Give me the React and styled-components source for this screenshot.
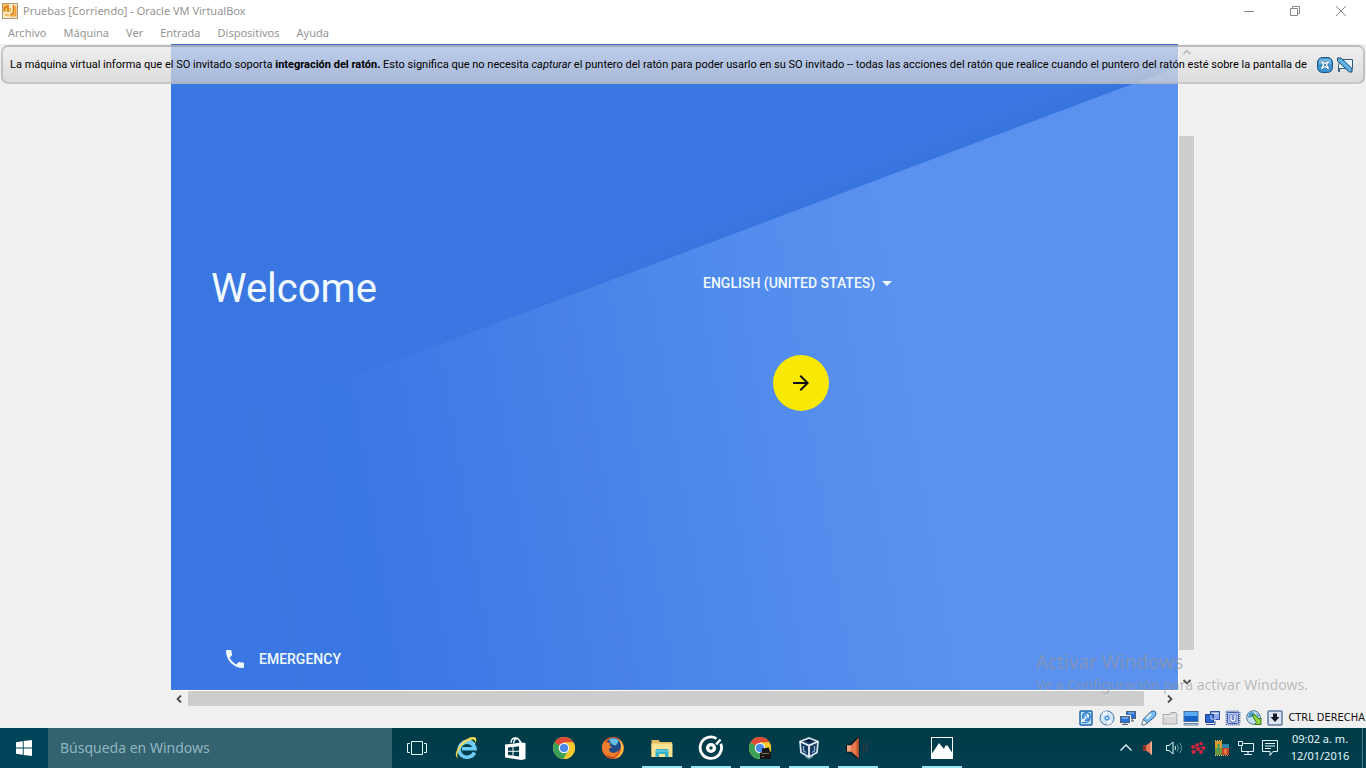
import React from 'react'
import styled, { createGlobalStyle } from 'styled-components'

const GlobalStyle = createGlobalStyle`
    * {
        box-sizing: border-box;
    }
    body {
        margin: 0;
        background-color: #f0f0f0;
        font-family: "Noto Sans", "Open Sans", sans-serif;
    }
    button, input, select {
        font-family: inherit;
        border: none;
        padding: 0;
        background: none;
        color: inherit;
    }
    svg {
        display: block;
    }
`
const Container = styled.div`
    min-height: 100vh;
    display: flex;
    flex-direction: column;
`

/* window chrome */
const TitleBar = styled.header`
    height: 24px;
    padding: 0 15px 2px 2px;
    display: flex;
    align-items: center;
    gap: 5px;
    background-color: #fff;
`
const Title = styled.h1`
    flex: 1;
    margin: 0;
    font-size: 11px;
    font-weight: 400;
    line-height: 16px;
    color: #959595;
`
const WindowButtons = styled.div`
    display: flex;
    gap: 26px;
`
const WindowButton = styled.button`
    width: 20px;
    height: 20px;
    display: flex;
    align-items: center;
    justify-content: center;
`
const MenuBar = styled.nav`
    height: 20px;
    padding: 0 0 2px 8px;
    display: flex;
    align-items: center;
    gap: 17px;
    background-color: #fff;
`
const MenuItem = styled.button`
    font-size: 11px;
    line-height: 16px;
    color: #959595;
`

/* guest screen */
const Stage = styled.main`
    position: relative;
    flex: 1;
    padding: 0 171px 1px;
    display: flex;
    background-color: #f0f0f0;
`
const Viewer = styled.div`
    flex: 1;
    display: grid;
    grid-template-columns: 1fr 16px;
    grid-template-rows: 1fr 16px;
    gap: 1px;
`
const Screen = styled.section`
    position: relative;
    border-top: 1px solid #3a6cc0;
    padding: 0 0 17px 40px;
    display: flex;
    flex-direction: column;
    justify-content: space-between;
    font-family: Roboto, sans-serif;
    color: #f1fbff;
    box-shadow: 1px 1px 0 #fff;
`
const Wallpaper = styled.svg`
    position: absolute;
    inset: 0;
    width: 100%;
    height: 100%;
`
const Setup = styled.div`
    position: relative;
    padding-top: 220px;
    display: flex;
    align-items: flex-start;
`
const Welcome = styled.h2`
    flex: 0 0 492px;
    margin: 0;
    font-size: 40px;
    font-weight: 400;
    line-height: 48px;
`
const Choices = styled.form`
    width: 196px;
    display: flex;
    flex-direction: column;
    align-items: center;
    gap: 60px;
`
const Language = styled.label`
    width: 100%;
    height: 30px;
    padding-top: 6px;
    display: flex;
    align-items: center;
    gap: 6px;
`
const LanguageSelect = styled.select`
    appearance: none;
    font-size: 14px;
    font-weight: 500;
    line-height: 20px;
`
const NextButton = styled.button`
    width: 56px;
    height: 56px;
    border-radius: 50%;
    background-color: #f8e804;
    display: flex;
    align-items: center;
    justify-content: center;
`
const Emergency = styled.button`
    position: relative;
    align-self: flex-start;
    margin-left: 12px;
    height: 28px;
    display: flex;
    align-items: center;
    gap: 12px;
    font-size: 14px;
    font-weight: 500;
    line-height: 20px;
`
const ScrollBar = styled.div`
    display: flex;
    flex-direction: ${props => props.$vertical ? 'column' : 'row'};
    background-color: #f0f0f0;
`
const ScrollButton = styled.button`
    flex: 0 0 16px;
    display: flex;
    align-items: center;
    justify-content: center;
    min-height: 16px;
`
const ScrollTrack = styled.div`
    flex: 1;
    display: flex;
    flex-direction: ${props => props.$vertical ? 'column' : 'row'};
    padding: ${props => props.$vertical ? '76px 1px 24px 0' : '0 18px 1px 1px'};
`
const ScrollThumb = styled.div`
    flex: 1;
    background-color: #cdcdcd;
`
const MessageBar = styled.aside`
    position: absolute;
    top: 1px;
    left: 1px;
    right: 1px;
    height: 39px;
    padding: 1px 10px 0 7px;
    display: flex;
    align-items: center;
    gap: 4px;
    border: 2px solid rgba(150, 150, 150, 0.45);
    border-radius: 7px;
    background: linear-gradient(rgba(238, 238, 238, 0.72), rgba(212, 212, 212, 0.72));
`
const Message = styled.p`
    flex: 1;
    min-width: 0;
    margin: 0;
    overflow: hidden;
    white-space: nowrap;
    font-family: Roboto, sans-serif;
    font-size: 11px;
    line-height: 16px;
    color: #000;
`
const MessageButton = styled.button`
    width: 16px;
    height: 16px;
`
const Watermark = styled.div`
    position: absolute;
    right: 55px;
    bottom: 13px;
    width: 275px;
    color: rgba(150, 150, 150, 0.6);
    pointer-events: none;
`
const WatermarkTitle = styled.div`
    font-size: 19px;
    line-height: 26px;
`
const WatermarkText = styled.div`
    font-size: 14px;
    line-height: 20px;
    white-space: nowrap;
`

/* status bar */
const StatusBar = styled.footer`
    height: 20px;
    padding-right: 1px;
    display: flex;
    align-items: center;
    justify-content: flex-end;
    gap: 5px;
    background-color: #f0f0f0;
    border-bottom: 1px solid #e4f1f7;
`
const StatusButton = styled.button`
    width: 16px;
    height: 16px;
`
const HostKey = styled.span`
    font-family: "DejaVu Sans Condensed", "DejaVu Sans", sans-serif;
    font-size: 11px;
    line-height: 16px;
    color: #111;
`

/* taskbar */
const TaskBar = styled.footer`
    height: 40px;
    display: flex;
    align-items: stretch;
    color: #e4f8fc;
    background: linear-gradient(#003b46, #003e50);
`
const StartButton = styled.button`
    width: 48px;
    display: flex;
    align-items: center;
    justify-content: center;
    background-color: #00445a;
`
const Search = styled.input`
    width: 344px;
    padding: 0 12px;
    background-color: #34626f;
    font-size: 14px;
    line-height: 20px;
    outline: none;
    &::placeholder {
        color: #8fb6bf;
        opacity: 1;
    }
`
const Apps = styled.div`
    flex: 1;
    padding-left: 5px;
    display: flex;
    gap: 9px;
`
const AppButton = styled.button`
    width: 40px;
    margin-left: ${props => props.$spaced ? '35px' : '0'};
    display: flex;
    align-items: center;
    justify-content: center;
    border-bottom: 2px solid ${props => props.$open ? '#98e4f6' : 'transparent'};
    border-top: 2px solid transparent;
`
const Tray = styled.div`
    display: flex;
    align-items: center;
    gap: 8px;
`
const TrayButton = styled.button`
    width: 16px;
    height: 16px;
`
const Clock = styled.time`
    width: 68px;
    padding-bottom: 2px;
    font-size: 11px;
    line-height: 17px;
    text-align: center;
`
const ShowDesktop = styled.button`
    width: 4px;
    align-self: stretch;
    border-left: 1px solid #4c7883;
`

/* title icons */
const VBoxLogo = () => (
    <svg width="16" height="16" viewBox="0 0 16 16">
        <rect x="0.5" y="0.5" width="15" height="15" fill="#fbe9c4" stroke="#a89a80" />
        <path d="M1 1h6l-1 6-5 3z" fill="#f6c35a" />
        <path d="M2.500 8V4.500L6 3v6M11.500 2v8l-3 2" fill="none" stroke="#d9781c" strokeWidth="1.600" />
        <path d="M13.500 3v9.500H8" fill="none" stroke="#eea030" strokeWidth="2" />
        <path d="M3 12h4M8 5v4" stroke="#f3ae36" strokeWidth="1.600" />
    </svg>
)
const Chevron = ({ d }) => (
    <svg width="8" height="8" viewBox="0 0 8 8">
        <path d={d} fill="none" stroke="#4b4b4b" strokeWidth="1.800" />
    </svg>
)

const CloseIcon = () => (
    <svg width="16" height="16" viewBox="0 0 16 16">
        <rect x="0.500" y="0.500" width="15" height="15" rx="5" fill="#3d93cd" stroke="#17547f" />
        <path d="M3 2h10q1 0 1 2v3H2V4q0-2 1-2z" fill="#86c5ec" opacity="0.700" />
        <path d="M5 3.500l3 2 3-2L12.500 5 10.500 8l2 3-1.500 1.500-3-2-3 2L3.500 11l2-3-2-3z" fill="#fff" stroke="#2a6d9f" strokeWidth="0.600" />
        <path d="M6.500 6.500l3 3M9.500 6.500l-3 3" stroke="#3d84b8" />
    </svg>
)
const MuteIcon = () => (
    <svg width="16" height="16" viewBox="0 0 16 16">
        <path d="M3 2.500h12.500v9h-3v3l-4-3H2.500v3h-1v-6z" fill="#e9f5fb" stroke="#315a78" />
        <path d="M0.500 1h3.500l11 10.500v3.500h-2.500L0.500 4z" fill="#62b3e5" stroke="#174b70" />
    </svg>
)

/* device icons */
const DiskIcon = () => (
    <svg width="16" height="16" viewBox="0 0 16 16">
        <rect x="2" y="1" width="12" height="14" rx="1" fill="#bfe3fa" stroke="#1b64b0" strokeWidth="1.500" />
        <circle cx="8.500" cy="6.500" r="4" fill="#5aaaf0" stroke="#1b64b0" />
        <path d="M8.500 6.500L4 12M9 4.500q2 1 1 3" stroke="#fff" strokeWidth="1.500" fill="none" />
        <path d="M4 12.500q6 1 8-3" stroke="#1b64b0" fill="none" />
    </svg>
)
const CdIcon = () => (
    <svg width="16" height="16" viewBox="0 0 16 16">
        <circle cx="8" cy="8" r="7" fill="#d5e6f8" stroke="#4270a5" />
        <path d="M8 8L3 3.500A7 7 0 0 1 8 1zM8 8l5 4.500A7 7 0 0 1 8 15z" fill="#f8fcff" />
        <circle cx="8" cy="8" r="2.500" fill="#3884e2" stroke="#8db8ef" />
        <circle cx="8" cy="8" r="1" fill="#fff" />
    </svg>
)
const NetworkIcon = () => (
    <svg width="16" height="16" viewBox="0 0 16 16">
        <rect x="6.500" y="1.500" width="9" height="7" fill="#2b70d4" stroke="#50617c" />
        <path d="M8 3h6" stroke="#a7ceff" />
        <path d="M12 9v2M10 11h4" stroke="#50617c" />
        <rect x="0.500" y="6.500" width="9" height="6" fill="#2c74da" stroke="#50617c" />
        <path d="M2 8h6" stroke="#a7ceff" />
        <path d="M2 14.500h6M5 13v2" stroke="#50617c" />
        <path d="M0 5.500h10.500v7.500" fill="none" stroke="#fff" />
    </svg>
)
const UsbIcon = () => (
    <svg width="16" height="16" viewBox="0 0 16 16">
        <path d="M10 1.500q4-1.500 5 1 0 3-2 5l-7 5.500-4-3.500z" fill="#78bdf2" stroke="#2c5d99" />
        <path d="M5 7.500l4-4 2 1-5 5z" fill="#e1f4ff" />
        <path d="M2.500 9.500l4 3.500L3 15H1v-2z" fill="#f4f8fb" stroke="#53708d" />
    </svg>
)
const FolderIcon = () => (
    <svg width="16" height="16" viewBox="0 0 16 16">
        <path d="M1 4.500h7l1-2h5l1 2v9.500H1z" fill="#d9d9d9" stroke="#aaa" />
        <path d="M2 6h12" stroke="#f2f2f2" />
    </svg>
)
const DisplayIcon = () => (
    <svg width="16" height="16" viewBox="0 0 16 16">
        <rect x="1" y="1.500" width="14" height="10" fill="#1663c8" stroke="#4b6e9c" />
        <path d="M1.500 2h13v4h-13z" fill="#5cabf5" />
        <path d="M1 13.500h14v1.500H1z" fill="#dbe7f3" stroke="#4b6e9c" strokeWidth="0.800" />
    </svg>
)
const CaptureIcon = () => (
    <svg width="16" height="16" viewBox="0 0 16 16">
        <rect x="6.500" y="1.500" width="9" height="8" fill="#8ca5f0" stroke="#33509f" />
        <path d="M8 3.500h6" stroke="#d3deff" strokeWidth="1.500" />
        <rect x="1.500" y="4.500" width="8" height="8" fill="#2a63cd" stroke="#27468c" />
        <path d="M7 5v4h5" fill="none" stroke="#c9d7ff" />
        <path d="M2 14.500h9V11" fill="none" stroke="#33509f" />
    </svg>
)
const CpuIcon = () => (
    <svg width="16" height="16" viewBox="0 0 16 16">
        <rect x="1.500" y="1.500" width="13" height="13" rx="1" fill="none" stroke="#5068ab" strokeWidth="2" strokeDasharray="1 1" />
        <rect x="2.500" y="2.500" width="11" height="11" rx="1" fill="#b4c8f6" stroke="#3f5aa6" />
        <path d="M6 4.500v4.500q0 2 2 2t2-2V4.500" fill="none" stroke="#3f5cab" strokeWidth="3" />
        <path d="M6 5v4q0 2 2 2t2-2V5" fill="none" stroke="#fff" strokeWidth="1.400" />
    </svg>
)
const MouseIcon = () => (
    <svg width="16" height="16" viewBox="0 0 16 16">
        <circle cx="7.500" cy="7.500" r="6.800" fill="#c5dff2" stroke="#45718e" />
        <path d="M3 3l4-1 2 2-3 3-4 1zM10 3l3 2-1 3z" fill="#4b9ac4" />
        <path d="M6 5h3l4 4 2-1v6.500H8.500l2-2z" fill="#91d63c" stroke="#347422" />
    </svg>
)
const HostIcon = () => (
    <svg width="16" height="16" viewBox="0 0 16 16">
        <rect x="1" y="1" width="14" height="14" rx="1" fill="#dce7f6" stroke="#627ba0" strokeWidth="1.500" />
        <path d="M6 3.500h4V7h2.500L8 12 3.500 7H6z" fill="#151b24" />
    </svg>
)

/* taskbar icons */
const WindowsIcon = () => (
    <svg width="16" height="16" viewBox="0 0 16 16">
        <path d="M0 2.200L6.800 1.200v6.300H0zM7.700 1.100L16 0v7.500H7.700zM0 8.400h6.800v6.400L0 13.800zM7.700 8.400H16V16l-8.300-1.100z" fill="#fff" />
    </svg>
)
const TaskViewIcon = () => (
    <svg width="20" height="14" viewBox="0 0 20 14">
        <path d="M4.500 0.500h11v13h-11zM3 2.500H0.500v9H3M17 2.500h2.500v9H17" fill="none" stroke="#e4f8fc" />
    </svg>
)
const ExplorerIcon = () => (
    <svg width="24" height="24" viewBox="0 0 24 24">
        <path d="M20.500 16.500A8 7.500 0 1 1 21 12.700H8" fill="none" stroke="#6dcdf6" strokeWidth="3.600" />
        <path d="M6 9q2-5 8-5 5 0 7 4" fill="none" stroke="#c0efff" />
        <path d="M4 22.500Q-1 20 5 10.500 13 0 20.500 1q3 1 1 6.500Q21.500 3 18 3.500 11.500 5 6.500 11.500 1.500 19 4 22.500z" fill="#f4d94f" />
    </svg>
)
const StoreIcon = () => (
    <svg width="24" height="24" viewBox="0 0 24 24">
        <path d="M8 7q0-4.500 4-5t5 4.500M10.500 7q1-5 4-4t3.500 4" fill="none" stroke="#fff" strokeWidth="1.300" />
        <path d="M2 8.500L18.500 6.500 22.500 7v16L18.500 24 2 21.500z" fill="#fff" />
        <path d="M5 11.500l4.500-.5v3.800H5zM10.500 10.900l5.500-.7v4.600h-5.500zM5 15.800h4.500v3.800L5 19.100zM10.500 15.800H16v4.700l-5.500-.7z" fill="#003c4c" />
    </svg>
)
const ChromeIcon = ({ badge }) => (
    <svg width="24" height="24" viewBox="0 0 24 24">
        <circle cx="12" cy="12" r="11" fill="#f6c92f" />
        <path d="M12 12L2.500 6.500A11 11 0 0 1 21.500 6.500H12z" fill="#df4939" />
        <path d="M12 12L2.500 6.500A11 11 0 0 0 11.500 23L16.500 14.500z" fill="#3ba057" />
        <path d="M12 6.500h9.500A11 11 0 0 1 11.500 23l5-8.500z" fill="#f6c92f" />
        <circle cx="12" cy="12" r="5.300" fill="#f2f4f4" />
        <circle cx="12" cy="12" r="4.100" fill="#4a88e8" />
        {badge && <path d="M14 12.500l7-1 1 4.500 1 .500V23H12v-6.500h2z" fill="#171717" />}
        {badge && <path d="M14 17.500h7M14 20.500h2" stroke="#8e6a4c" />}
    </svg>
)
const FirefoxIcon = () => (
    <svg width="24" height="24" viewBox="0 0 24 24">
        <circle cx="12" cy="12" r="11" fill="#dd5a22" />
        <circle cx="12.500" cy="9.500" r="7.500" fill="#1d4c87" />
        <path d="M8 3.500q5-3 10 1l-3 5-4-1z" fill="#63bde6" />
        <path d="M18 3.500q5 4 4.500 10-1.500 8-9.500 9.500 6-3.500 7-9.500.500-5-2-10z" fill="#f8c04a" />
        <path d="M1.500 8L3.500 4.500 5 6.500q2.500-.500 4.500.500l-1 2.500 2.500 1.500-3 2q0 3.500 4 4 3 0 5-2.500-1 6.500-7 6.500-8-.500-9-9z" fill="#ee7d2d" />
        <path d="M4 17q4 5 10 4-5 3.500-10-4z" fill="#a93319" />
    </svg>
)
const FilesIcon = () => (
    <svg width="24" height="24" viewBox="0 0 24 24">
        <path d="M1.500 4h7l1.500 2h12v15h-20.500z" fill="#e3bd5c" />
        <path d="M1.500 7.500h21V21h-21z" fill="#fbe395" />
        <path d="M5.500 21v-6.500q0-1.500 1.500-1.500h10q1.500 0 1.500 1.500V21h-3.500v-3h-6v3z" fill="#35b1c9" />
        <path d="M5.500 15h13" stroke="#82dbe5" />
    </svg>
)
const GrooveIcon = () => (
    <svg width="26" height="26" viewBox="0 0 26 26">
        <path d="M18.500 3.600A10.700 10.700 0 1 0 22.800 8.800" fill="none" stroke="#fff" strokeWidth="2.800" />
        <circle cx="13" cy="13" r="3.400" fill="none" stroke="#fff" strokeWidth="3.400" />
        <path d="M18 9.500L22.500 4.500" stroke="#fff" strokeWidth="2.600" />
    </svg>
)
const CubeIcon = () => (
    <svg width="24" height="24" viewBox="0 0 24 24">
        <path d="M12 2l9 3.500-1 11L12 21l-8-4.500-1-11z" fill="#173b63" stroke="#d8e7f1" strokeWidth="1.700" />
        <path d="M3 5.500l9 4 9-4M12 9.500V21" fill="none" stroke="#eef7fd" strokeWidth="1.700" />
        <path d="M8 4.800l4-1.300 4 1.300-4 1.700z" fill="#04172d" />
        <path d="M6.500 10v5l2.500 1.500M17.500 10v5L15 16.500" fill="none" stroke="#93b2ca" strokeWidth="1.300" />
        <path d="M8 20.500l4 2.500 4-2.500" fill="none" stroke="#7ea0b7" />
    </svg>
)
const HornIcon = () => (
    <svg width="24" height="24" viewBox="0 0 24 24">
        <path d="M0 8.500h3L11 1h2.500v22H11l-7-6H0z" fill="#0a2029" />
        <path d="M1 9.500h4L12.500 2v20L5 15.500H1z" fill="#e8794d" />
        <path d="M1 9.500h4v6H1z" fill="#f0a47c" />
        <path d="M10.500 4l2-2v20l-2-2z" fill="#c4562f" />
        <path d="M17 8q2 4 0 8M20 6q3 6 0 12" fill="none" stroke="#2d3b43" strokeWidth="1.500" />
    </svg>
)
const PhotosIcon = () => (
    <svg width="22" height="22" viewBox="0 0 22 22">
        <rect x="0.500" y="0.500" width="21" height="21" fill="#003c4c" stroke="#fff" />
        <path d="M1 16.500L8 6l5 6 1.500-3.500h2l4.500 7V21H1z" fill="#fff" />
    </svg>
)

/* tray icons */
const TrayUp = () => (
    <svg width="16" height="16" viewBox="0 0 16 16">
        <path d="M2.500 10.500L8 5l5.500 5.500" fill="none" stroke="#e4f8fc" strokeWidth="1.300" />
    </svg>
)
const TrayHorn = () => (
    <svg width="16" height="16" viewBox="0 0 16 16">
        <path d="M1 5.500h3L10 1v14L4 10.500H1z" fill="#e27757" />
        <path d="M1 5.500h3v5H1z" fill="#8d3022" />
        <path d="M8.500 2.200L10 1v14l-1.500-1.200z" fill="#f1b39b" />
    </svg>
)
const TrayVolume = () => (
    <svg width="16" height="16" viewBox="0 0 16 16">
        <path d="M0.500 5.500h2.500L7 2v12L3 10.500H0.500z" fill="none" stroke="#e4f8fc" />
        <path d="M9 6q1.500 2 0 4" fill="none" stroke="#e4f8fc" />
        <path d="M11 4.500q3 3.500 0 7M13.500 3q4 5 0 10" fill="none" stroke="#6f96a0" />
    </svg>
)
const TrayPaw = () => (
    <svg width="16" height="16" viewBox="0 0 16 16">
        <g fill="#d32640">
            <circle cx="3" cy="7" r="1.900" />
            <circle cx="7" cy="5" r="1.900" />
            <circle cx="11" cy="3.500" r="1.700" />
            <circle cx="13.500" cy="8" r="2" />
            <circle cx="3.500" cy="12" r="2" />
            <circle cx="11" cy="12" r="1.900" />
            <circle cx="8" cy="9" r="1.900" />
        </g>
        <path d="M4 8l8-1M5 11l6-1" stroke="#b02038" />
    </svg>
)
const TrayBlocks = () => (
    <svg width="16" height="16" viewBox="0 0 16 16">
        <path d="M1 1h7v7H1z" fill="#d89b2c" />
        <path d="M8 4h7v4H8z" fill="#2c84a8" />
        <path d="M1 8h7v7H1z" fill="#6d983e" />
        <path d="M8 8h7v7H8z" fill="#c8442b" />
        <path d="M1 0.500h8M1 15.500h14" stroke="#e2c37d" strokeDasharray="1 1" />
        <path d="M4.500 4v7" stroke="#3d9c6c" strokeWidth="2" />
        <path d="M11.500 9v5" stroke="#ee8f4b" strokeWidth="2" />
    </svg>
)
const TrayNetwork = () => (
    <svg width="16" height="16" viewBox="0 0 16 16">
        <path d="M5.500 3.500h10v8h-12v-5M10 11.500v3M6 14.500h8" fill="none" stroke="#e4f8fc" />
        <path d="M0.500 1.500h4v4h-4z" fill="none" stroke="#e4f8fc" />
    </svg>
)
const TrayActions = () => (
    <svg width="16" height="16" viewBox="0 0 16 16">
        <path d="M0.500 0.500h15v11H11l-3 4v-4H0.500z" fill="none" stroke="#e4f8fc" />
        <path d="M3 3.500h10M3 6h10M3 8.500h6" stroke="#e4f8fc" />
    </svg>
)

const menus = ['Archivo', 'Máquina', 'Ver', 'Entrada', 'Dispositivos', 'Ayuda']
const devices = [
    ['Disco duro', DiskIcon],
    ['Unidad óptica', CdIcon],
    ['Red', NetworkIcon],
    ['USB', UsbIcon],
    ['Carpetas compartidas', FolderIcon],
    ['Pantalla', DisplayIcon],
    ['Captura', CaptureIcon],
    ['Procesador', CpuIcon],
    ['Ratón', MouseIcon],
    ['Tecla anfitrión', HostIcon],
]
const tray = [
    ['Mostrar iconos ocultos', TrayUp],
    ['Sonido', TrayHorn],
    ['Altavoces', TrayVolume],
    ['Asistente', TrayPaw],
    ['Bloques', TrayBlocks],
    ['Red', TrayNetwork],
    ['Notificaciones', TrayActions],
]

const GuestWallpaper = () => (
    <Wallpaper viewBox="0 0 1007 646" preserveAspectRatio="none">
        <defs>
            <linearGradient id="sheet" gradientUnits="userSpaceOnUse" x1="80" y1="430" x2="740" y2="320">
                <stop offset="0" stopColor="#3a77e1" />
                <stop offset="0.14" stopColor="#3a77e6" />
                <stop offset="0.3" stopColor="#407ce7" />
                <stop offset="0.5" stopColor="#4882e7" />
                <stop offset="0.7" stopColor="#4e8aeb" />
                <stop offset="0.9" stopColor="#588fee" />
                <stop offset="1" stopColor="#5b92f0" />
            </linearGradient>
            <linearGradient id="shade" gradientUnits="userSpaceOnUse" x1="791" y1="84" x2="802" y2="112">
                <stop offset="0" stopColor="#2f69cf" stopOpacity="0" />
                <stop offset="1" stopColor="#2f69cf" stopOpacity="0.35" />
            </linearGradient>
        </defs>
        <rect width="1007" height="646" fill="#3a77e2" />
        <path d="M350 269L1007 -38V22z" fill="url(#shade)" />
        <path d="M80 371L1007 22V646H130z" fill="url(#sheet)" />
    </Wallpaper>
)

const VmDisplay = () => (
    <Viewer>
        <Screen>
            <GuestWallpaper />
            <Setup>
                <Welcome>Welcome</Welcome>
                <Choices onSubmit={e => e.preventDefault()}>
                    <Language>
                        <LanguageSelect aria-label="Language">
                            <option>ENGLISH (UNITED STATES)</option>
                        </LanguageSelect>
                        <svg width="10" height="5" viewBox="0 0 10 5">
                            <path d="M0 0h10L5 5z" fill="#f1fbff" />
                        </svg>
                    </Language>
                    <NextButton aria-label="Next">
                        <svg width="24" height="24" viewBox="0 0 24 24">
                            <path d="M12 4l-1.410 1.410L16.170 11H4v2h12.170l-5.580 5.590L12 20l8-8z" fill="#111" />
                        </svg>
                    </NextButton>
                </Choices>
            </Setup>
            <Emergency>
                <svg width="24" height="24" viewBox="0 0 24 24">
                    <path d="M6.620 10.790c1.440 2.830 3.760 5.140 6.590 6.590l2.200-2.200c.27-.27.670-.36 1.020-.24 1.120.37 2.330.57 3.570.57.550 0 1 .45 1 1V20c0 .550-.45 1-1 1-9.390 0-17-7.610-17-17 0-.55.45-1 1-1h3.500c.550 0 1 .45 1 1 0 1.250.2 2.450.57 3.570.11.350.030.740-.25 1.020l-2.200 2.200z" fill="#f1fbff" />
                </svg>
                EMERGENCY
            </Emergency>
        </Screen>
        <ScrollBar $vertical>
            <ScrollButton aria-label="Subir"><Chevron d="M0.500 6L4 2.500 7.500 6" /></ScrollButton>
            <ScrollTrack $vertical><ScrollThumb /></ScrollTrack>
            <ScrollButton aria-label="Bajar"><Chevron d="M0.500 2L4 5.500 7.500 2" /></ScrollButton>
        </ScrollBar>
        <ScrollBar>
            <ScrollButton aria-label="Izquierda"><Chevron d="M6 0.500L2.500 4 6 7.500" /></ScrollButton>
            <ScrollTrack><ScrollThumb /></ScrollTrack>
            <ScrollButton aria-label="Derecha"><Chevron d="M2 0.500L5.500 4 2 7.500" /></ScrollButton>
        </ScrollBar>
    </Viewer>
)

const App = () => {
    return (
        <Container>
            <GlobalStyle />
            <TitleBar>
                <VBoxLogo />
                <Title>Pruebas [Corriendo] - Oracle VM VirtualBox</Title>
                <WindowButtons>
                    <WindowButton aria-label="Minimizar">
                        <svg width="10" height="10" viewBox="0 0 10 10"><path d="M0 5.500h10" stroke="#888" /></svg>
                    </WindowButton>
                    <WindowButton aria-label="Restaurar">
                        <svg width="10" height="10" viewBox="0 0 10 10">
                            <path d="M0.500 2.500h7v7h-7zM2.500 2V0.500h7v7H8" fill="none" stroke="#888" />
                        </svg>
                    </WindowButton>
                    <WindowButton aria-label="Cerrar">
                        <svg width="10" height="10" viewBox="0 0 10 10"><path d="M0 0l10 10M10 0L0 10" stroke="#888" /></svg>
                    </WindowButton>
                </WindowButtons>
            </TitleBar>
            <MenuBar>
                {menus.map(name => <MenuItem key={name}>{name}</MenuItem>)}
            </MenuBar>
            <Stage>
                <VmDisplay />
                <MessageBar>
                    <Message>
                        La máquina virtual informa que el SO invitado soporta <b>integración del ratón.</b> Esto significa que no necesita <i>capturar</i> el puntero del ratón para poder usarlo en su SO invitado -- todas las acciones del ratón que realice cuando el puntero del ratón esté sobre la pantalla de
                    </Message>
                    <MessageButton aria-label="Cerrar mensaje"><CloseIcon /></MessageButton>
                    <MessageButton aria-label="No volver a mostrar"><MuteIcon /></MessageButton>
                </MessageBar>
                <Watermark>
                    <WatermarkTitle>Activar Windows</WatermarkTitle>
                    <WatermarkText>Ve a Configuración para activar Windows.</WatermarkText>
                </Watermark>
            </Stage>
            <StatusBar>
                {devices.map(([name, Icon]) => (
                    <StatusButton key={name} aria-label={name}><Icon /></StatusButton>
                ))}
                <HostKey>CTRL DERECHA</HostKey>
            </StatusBar>
            <TaskBar>
                <StartButton aria-label="Inicio"><WindowsIcon /></StartButton>
                <Search aria-label="Buscar" placeholder="Búsqueda en Windows" />
                <Apps>
                    <AppButton aria-label="Vista de tareas"><TaskViewIcon /></AppButton>
                    <AppButton aria-label="Internet Explorer"><ExplorerIcon /></AppButton>
                    <AppButton aria-label="Tienda"><StoreIcon /></AppButton>
                    <AppButton aria-label="Chrome"><ChromeIcon /></AppButton>
                    <AppButton aria-label="Firefox"><FirefoxIcon /></AppButton>
                    <AppButton aria-label="Explorador" $open><FilesIcon /></AppButton>
                    <AppButton aria-label="Groove" $open><GrooveIcon /></AppButton>
                    <AppButton aria-label="Chrome, perfil" $open><ChromeIcon badge /></AppButton>
                    <AppButton aria-label="VirtualBox" $open><CubeIcon /></AppButton>
                    <AppButton aria-label="Megáfono" $open><HornIcon /></AppButton>
                    <AppButton aria-label="Fotos" $open $spaced><PhotosIcon /></AppButton>
                </Apps>
                <Tray>
                    {tray.map(([name, Icon]) => (
                        <TrayButton key={name} aria-label={name}><Icon /></TrayButton>
                    ))}
                    <Clock>09:02 a. m.<br />12/01/2016</Clock>
                    <ShowDesktop aria-label="Mostrar escritorio" />
                </Tray>
            </TaskBar>
        </Container>
    )
}

export default App
